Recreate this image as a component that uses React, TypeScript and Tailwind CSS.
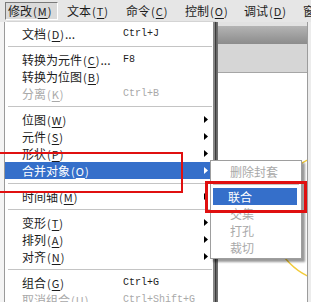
import type React from 'react';

const font = { fontFamily: '"Noto Sans CJK SC", "DejaVu Sans", sans-serif' };

type Row =
  | { kind: 'sep' }
  | { kind: 'item'; label: string; key: string; tail?: string; shortcut?: string; arrow?: boolean; disabled?: boolean; active?: boolean };

const rows: Row[] = [
  { kind: 'item', label: '文档', key: 'D', tail: '...', shortcut: 'Ctrl+J' },
  { kind: 'sep' },
  { kind: 'item', label: '转换为元件', key: 'C', tail: '...', shortcut: 'F8' },
  { kind: 'item', label: '转换为位图', key: 'B' },
  { kind: 'item', label: '分离', key: 'K', shortcut: 'Ctrl+B', disabled: true },
  { kind: 'sep' },
  { kind: 'item', label: '位图', key: 'W', arrow: true },
  { kind: 'item', label: '元件', key: 'S', arrow: true },
  { kind: 'item', label: '形状', key: 'P', arrow: true },
  { kind: 'item', label: '合并对象', key: 'O', arrow: true, active: true },
  { kind: 'sep' },
  { kind: 'item', label: '时间轴', key: 'M', arrow: true },
  { kind: 'sep' },
  { kind: 'item', label: '变形', key: 'T', arrow: true },
  { kind: 'item', label: '排列', key: 'A', arrow: true },
  { kind: 'item', label: '对齐', key: 'N', arrow: true },
  { kind: 'sep' },
  { kind: 'item', label: '组合', key: 'G', shortcut: 'Ctrl+G' },
  { kind: 'item', label: '取消组合', key: 'U', shortcut: 'Ctrl+Shift+G', disabled: true },
];

const menus = [
  { label: '修改', key: 'M' },
  { label: '文本', key: 'T' },
  { label: '命令', key: 'C' },
  { label: '控制', key: 'O' },
  { label: '调试', key: 'D' },
];

export default function App() {
  return (
    <div className="relative h-[302px] w-[311px] overflow-hidden bg-[#f2f2f2] text-[12px] text-[#1c1c1c]" style={font}>
      <div className="flex h-[22px] items-center gap-[6px] overflow-hidden bg-[#e6e6e6] pl-[5px]">
        {menus.map((m, i) => (
          <div
            key={m.label}
            className={
              i === 0
                ? 'flex h-[18px] w-[53px] shrink-0 items-center border border-t-[#7a7a7a] border-l-[#7a7a7a] border-r-white border-b-white bg-[#dadada] pl-[2px]'
                : 'flex h-[18px] w-[53px] shrink-0 items-center pl-[3px]'
            }
          >
            <Label text={m.label} k={m.key} />
          </div>
        ))}
        <div className="shrink-0 pl-[3px]">窗</div>
      </div>

      <div className="flex h-[280px]">
        <div className="w-[215px] shrink-0 bg-[#f4f4f4]" />
        <div className="flex w-[92px] shrink-0 flex-col border-l-[3px] border-[#6e6e6e]">
          <div className="h-[4px] bg-[#e2e2e2]" />
          <div className="h-[18px] bg-gradient-to-b from-[#b4b4b4] to-[#8c8c8c]" />
          <div className="h-[29px] border-b border-[#a6a6a6] bg-[#d6d6d6]" />
          <div className="relative flex-1 overflow-hidden bg-white">
            <svg className="absolute left-0 top-0" width="92" height="240">
              <circle cx="117" cy="145" r="64" fill="none" stroke="#f2cb3a" strokeWidth="1.5" />
            </svg>
          </div>
        </div>
        <div className="flex-1 border-l border-[#9c9c9c] bg-[#ececec]" />
      </div>

      <div className="absolute left-[4px] top-[22px] w-[209px] border-l border-b border-[#9a9a9a] bg-white pt-[3px] shadow-[3px_0_1px_rgba(0,0,0,0.45)]">
        {rows.map((r, i) =>
          r.kind === 'sep' ? (
            <div key={i} className="flex h-[9px] items-center pl-[3px] pr-[1px]">
              <div className="h-px flex-1 bg-[#c4c4c4]" />
            </div>
          ) : (
            <div
              key={i}
              className={
                r.active
                  ? 'relative mr-[1px] flex h-[17px] items-center bg-[#356fca] pl-[17px] text-white'
                  : r.disabled
                    ? 'relative flex h-[17px] items-center pl-[17px] text-[#a9a9a9]'
                    : 'relative flex h-[17px] items-center pl-[17px]'
              }
            >
              <div className="w-[101px] shrink-0 whitespace-nowrap">
                <Label text={r.label} k={r.key} tail={r.tail} />
              </div>
              {r.shortcut && (
                <span className="whitespace-nowrap text-[10px]" style={{ fontFamily: '"Liberation Mono", monospace' }}>
                  {r.shortcut}
                </span>
              )}
              {r.arrow && <Arrow color={r.active ? '#ffffff' : '#000000'} />}
            </div>
          ),
        )}
      </div>

      <div className="absolute left-[210px] top-[160px] w-[92px] border border-[#9e9e9e] bg-white py-[2px] shadow-[3px_3px_2px_rgba(0,0,0,0.4)]">
        <SubItem text="删除封套" />
        <div className="flex h-[8px] items-center px-[2px]">
          <div className="h-px flex-1 bg-[#c4c4c4]" />
        </div>
        <div className="ml-[2px] mr-[4px] flex h-[17px] items-center bg-[#356fca] pl-[15px] text-white">联合</div>
        <SubItem text="交集" />
        <SubItem text="打孔" />
        <SubItem text="裁切" />
      </div>

      <div className="absolute left-[-4px] top-[152px] h-[41px] w-[187px] border-2 border-[#e01010]" />
      <div className="absolute left-[205px] top-[181px] h-[32px] w-[102px] border-[3px] border-[#e01010]" />
    </div>
  );
}

function Label({ text, k, tail }: { text: string; k: string; tail?: string }) {
  return (
    <span className="whitespace-nowrap">
      {text}
      <span className="ml-[1px] text-[11px] tracking-[1px]">
        (<span className="underline underline-offset-2">{k}</span>)
      </span>
      {tail}
    </span>
  );
}

function SubItem({ text }: { text: string }) {
  return <div className="flex h-[17px] items-center pl-[19px] text-[#a9a9a9]">{text}</div>;
}

function Arrow({ color }: { color: string }) {
  return (
    <svg className="absolute left-[199px] top-[5px]" width="4" height="7" viewBox="0 0 4 7">
      <path d="M0 0 L4 3.5 L0 7 Z" fill={color} />
    </svg>
  );
}
